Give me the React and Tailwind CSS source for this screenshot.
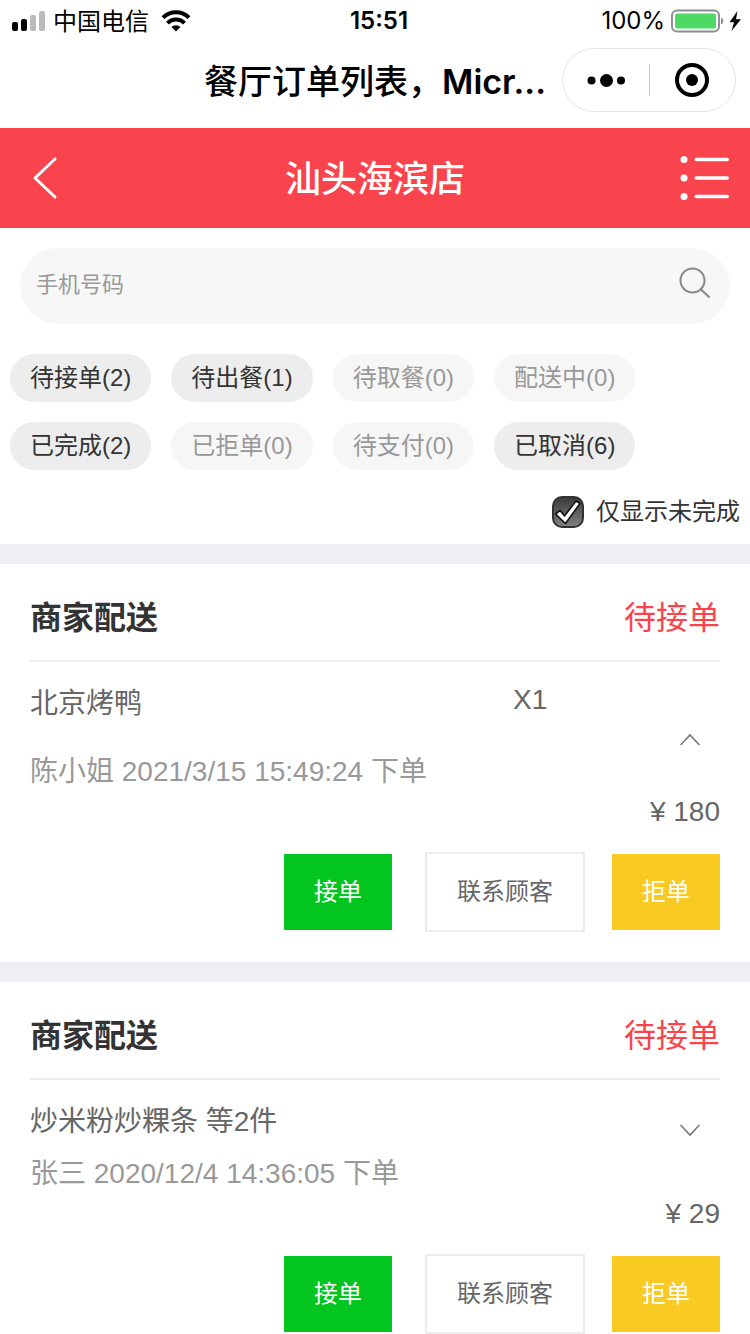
import {useState} from 'react';
import clsx from 'clsx';

const FILTERS = [
    {label: '待接单', count: 2},
    {label: '待出餐', count: 1},
    {label: '待取餐', count: 0},
    {label: '配送中', count: 0},
    {label: '已完成', count: 2},
    {label: '已拒单', count: 0},
    {label: '待支付', count: 0},
    {label: '已取消', count: 6}
];

const ORDERS = [
    {
        id: 1,
        type: '商家配送',
        status: '待接单',
        summary: '北京烤鸭',
        items: [{name: '北京烤鸭', qty: 1}],
        customer: '陈小姐',
        time: '2021/3/15 15:49:24',
        price: 180,
        open: true
    },
    {
        id: 2,
        type: '商家配送',
        status: '待接单',
        summary: '炒米粉炒粿条 等2件',
        items: [{name: '炒米粉', qty: 1}, {name: '炒粿条', qty: 1}],
        customer: '张三',
        time: '2020/12/4 14:36:05',
        price: 29,
        open: false
    }
];

const StatusBar = () => (
    <div className="grid h-10 grid-cols-3 items-center pl-3 pr-2 font-['Inter','Noto_Sans_CJK_SC',sans-serif] text-black">
        <div className="flex items-center gap-2 text-2xl leading-10">
            <svg width="33" height="20" viewBox="0 0 33 20" aria-hidden="true">
                <rect x="0" y="11" width="6" height="9" rx="2"/>
                <rect x="9" y="8" width="6" height="12" rx="2"/>
                <rect x="18" y="4" width="6" height="16" rx="2" fill="#bbb"/>
                <rect x="27" y="0" width="6" height="20" rx="2" fill="#bbb"/>
            </svg>
            <span className="pt-0.5">中国电信</span>
            <svg className="ml-1" width="30" height="22" viewBox="0 0 30 22" fill="none" stroke="#000" strokeWidth="4"
                 aria-hidden="true">
                <path d="M2 7.7a18.5 18.5 0 0 1 26 0"/>
                <path d="M6.500 13.200a11.5 11.5 0 0 1 17 0"/>
                <path d="M10.5 17a6.5 6.5 0 0 1 9 0L15 21.5z" fill="#000" stroke="none"/>
            </svg>
        </div>
        <div className="pl-1 text-center text-2xl font-semibold">15:51</div>
        <div className="flex items-center justify-end gap-1.5 text-2xl">
            <span>100%</span>
            <svg width="71" height="24" viewBox="0 0 71 24" aria-hidden="true">
                <rect x="1" y="1.5" width="47" height="21" rx="5" fill="#fff" stroke="#8e8e93" strokeWidth="2"/>
                <rect x="4" y="4.5" width="41" height="15" rx="2" fill="#4cd964"/>
                <path d="M50 8.5c3 1 3 6 0 7z" fill="#8e8e93"/>
                <path d="M66.5 2 58.500 13.300h4.600L60.500 22 70 10.300h-5z"/>
            </svg>
        </div>
    </div>
);

const TitleBar = () => (
    <div className="grid h-22 grid-cols-[1fr_auto_1fr] items-start pt-2">
        <h1 className="col-start-2 pt-0.5 text-center font-['Inter','Noto_Sans_CJK_SC',sans-serif] text-[34px] leading-16 font-medium whitespace-nowrap text-black">
            餐厅订单列表，<span className="font-semibold">Micr...</span>
        </h1>
        <div className="mr-3.5 flex h-16 w-[174px] items-center justify-self-end rounded-full border border-[#e5e5e5]">
            <button type="button" aria-label="更多" className="flex flex-1 justify-center">
                <svg width="38" height="14" viewBox="0 0 38 14">
                    <circle cx="4.5" cy="7.500" r="4"/>
                    <circle cx="19.500" cy="7.500" r="6.5"/>
                    <circle cx="34" cy="7.500" r="4"/>
                </svg>
            </button>
            <span className="h-8 w-px bg-[#ccc]"/>
            <button type="button" aria-label="关闭" className="flex flex-1 justify-center">
                <svg width="34" height="34" viewBox="0 0 34 34">
                    <circle cx="17" cy="17" r="15" fill="none" stroke="#000" strokeWidth="4"/>
                    <circle cx="17" cy="17" r="6"/>
                </svg>
            </button>
        </div>
    </div>
);

const StoreHeader = () => (
    <header className="grid h-25 grid-cols-[1fr_auto_1fr] items-center bg-[#fa444d] px-5 text-white">
        <button type="button" aria-label="返回" className="justify-self-start pl-3">
            <svg width="26" height="44" viewBox="0 0 26 44" fill="none" stroke="currentColor" strokeWidth="3"
                 strokeLinecap="round" strokeLinejoin="round">
                <path d="M23 3 3 22l20 19"/>
            </svg>
        </button>
        <h2 className="pt-1 text-4xl font-medium">汕头海滨店</h2>
        <button type="button" aria-label="菜单" className="justify-self-end">
            <svg width="50" height="46" viewBox="0 0 50 46" fill="currentColor">
                <circle cx="4" cy="4.5" r="3.5"/>
                <circle cx="4" cy="23" r="3.5"/>
                <circle cx="4" cy="41.5" r="3.5"/>
                <rect x="14.5" y="2.7" width="34.5" height="3.6" rx="1.8"/>
                <rect x="14.5" y="21.2" width="34.5" height="3.6" rx="1.8"/>
                <rect x="14.5" y="39.7" width="34.5" height="3.6" rx="1.8"/>
            </svg>
        </button>
    </header>
);

const SearchBox = () => {
    const [phone, setPhone] = useState('');

    return (
        <div className="flex h-19 items-center rounded-full bg-[#f7f7f7] px-4 pb-1">
            <input
                type="tel"
                aria-label="手机号码"
                placeholder="手机号码"
                value={phone}
                onChange={(e) => setPhone(e.target.value)}
                className="min-w-0 flex-1 bg-transparent text-[22px] text-[#333] outline-none placeholder:text-[#999]"
            />
            <button type="button" aria-label="搜索">
                <svg width="36" height="36" viewBox="0 0 36 36" fill="none" stroke="#888" strokeWidth="2">
                    <circle cx="14.5" cy="14.5" r="12"/>
                    <path d="m23 23.5 8 7.5" strokeLinecap="round"/>
                </svg>
            </button>
        </div>
    );
};

const FilterList = () => (
    <div className="mt-[30px] flex flex-wrap gap-5 px-2.5">
        {FILTERS.map((f) => (
            <button
                key={f.label}
                type="button"
                className={clsx(
                    'h-12 rounded-full px-5 text-2xl',
                    f.count > 0 ? 'bg-[#ededed] text-[#333]' : 'bg-[#f6f6f6] text-[#999]'
                )}
            >
                {f.label}({f.count})
            </button>
        ))}
    </div>
);

const UnfinishedToggle = () => {
    const [checked, setChecked] = useState(true);

    return (
        <div className="mt-[26px] flex justify-end px-2.5 pb-4">
            <label className="flex items-center gap-3 text-2xl text-[#333]">
                <span className="grid size-8">
                    <input
                        type="checkbox"
                        checked={checked}
                        onChange={(e) => setChecked(e.target.checked)}
                        className="col-start-1 row-start-1 size-8 appearance-none rounded-[10px] border-2 border-[#333] bg-linear-to-b from-[#3c3c3c] to-[#808080]"
                    />
                    {checked && (
                        <svg className="pointer-events-none col-start-1 row-start-1" width="32" height="32"
                             viewBox="0 0 32 32" aria-hidden="true">
                            <path d="m3.500 18 4.500-3.500 4.500 5.500L24 5l4 2.500L13.500 27.500z" fill="#fff" stroke="#111"
                                  strokeWidth="1.600" strokeLinejoin="round"/>
                        </svg>
                    )}
                </span>
                仅显示未完成
            </label>
        </div>
    );
};

const OrderCard = ({order}) => {
    const [open, setOpen] = useState(order.open);

    return (
        <article className="mt-5 bg-white p-[30px] pt-0">
            <div className="flex h-[98px] items-center justify-between border-b-2 border-[#ededed] pt-3 text-[32px]">
                <h3 className="font-bold text-[#333]">{order.type}</h3>
                <span className="text-[#fa444d]">{order.status}</span>
            </div>

            <div className="flex justify-between pt-[22px] text-[28px] leading-10 text-[#666]">
                <div className="flex-1 pb-3">
                    {open ? (
                        <ul>
                            {order.items.map((item) => (
                                <li key={item.name} className="mb-4 flex">
                                    <span className="w-3/4">{item.name}</span>
                                    <span className="leading-8">X{item.qty}</span>
                                </li>
                            ))}
                        </ul>
                    ) : (
                        <p>{order.summary}</p>
                    )}
                </div>
                <button
                    type="button"
                    aria-label={open ? '收起' : '展开'}
                    aria-expanded={open}
                    onClick={() => setOpen(!open)}
                    className="self-end pr-5 pl-1.5"
                >
                    <svg className={clsx(open && 'rotate-180')} width="20" height="36" viewBox="0 0 20 36"
                         fill="none" stroke="#777" strokeWidth="1.6">
                        <path d="m.6 7 9.4 10 9.4-10"/>
                    </svg>
                </button>
            </div>

            <p className="text-[28px] leading-10 text-[#999]">{order.customer} {order.time} 下单</p>
            <p className="text-right text-[28px] leading-10 text-[#666]">¥ {order.price}</p>

            <div className="flex items-center justify-end pt-5 text-2xl">
                <button type="button" className="h-19 w-27 bg-[#03c520] text-white">接单</button>
                <button type="button" className="mr-[27px] ml-[33px] h-20 w-40 border-2 border-[#ededed] text-[#666]">
                    联系顾客
                </button>
                <button type="button" className="h-19 w-27 bg-[#f8ca22] text-white">拒单</button>
            </div>
        </article>
    );
};

export default function App() {
    return (
        <div className="h-screen overflow-hidden bg-[#eeeef3] font-['Liberation_Sans','Noto_Sans_CJK_SC',sans-serif]">
            <div className="bg-white">
                <StatusBar/>
                <TitleBar/>
                <StoreHeader/>
                <div className="px-5 pt-5">
                    <SearchBox/>
                </div>
                <FilterList/>
                <UnfinishedToggle/>
            </div>
            {ORDERS.map((order) => (
                <OrderCard key={order.id} order={order}/>
            ))}
        </div>
    );
}
